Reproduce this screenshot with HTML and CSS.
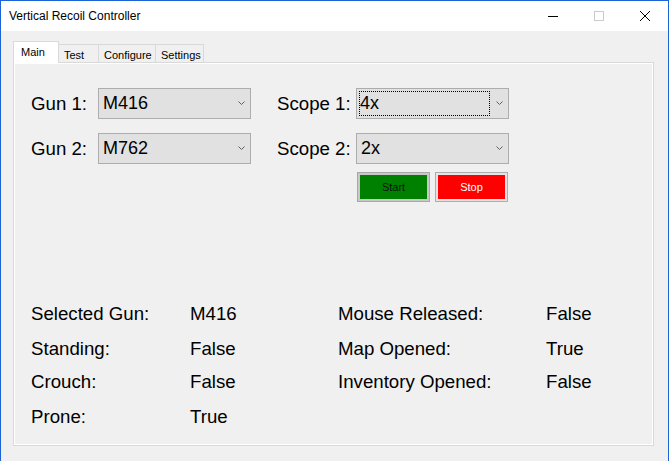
FILE: index.html
```html
<!DOCTYPE html>
<html lang="en">
<head>
  <meta charset="UTF-8" />
  <title>Vertical Recoil Controller</title>
  <link rel="stylesheet" href="styles.css">
</head>
<body>
  <div class="window">
    <!-- Caption bar -->
    <div class="title-bar">
      <span class="title">Vertical Recoil Controller</span>
      <div class="caption-buttons">
        <span class="caption-btn">
          <svg width="10" height="10" viewBox="0 0 10 10"><line x1="0" y1="5.5" x2="10" y2="5.5" stroke="#000" stroke-width="1"/></svg>
        </span>
        <span class="caption-btn">
          <svg width="10" height="10" viewBox="0 0 10 10"><rect x="0.5" y="0.5" width="9" height="9" fill="none" stroke="#cccccc" stroke-width="1"/></svg>
        </span>
        <span class="caption-btn">
          <svg width="10" height="10" viewBox="0 0 10 10"><path d="M0 0 L10 10 M10 0 L0 10" stroke="#000" stroke-width="1"/></svg>
        </span>
      </div>
    </div>

    <div class="tab-control">
      <div class="tab-strip">
        <div class="tab tab-main active">Main</div>
        <div class="tab tab-test">Test</div>
        <div class="tab tab-configure">Configure</div>
        <div class="tab tab-settings">Settings</div>
      </div>

      <div class="tab-page">
        <div class="selectors">
          <div class="field-group gun-group">
            <label class="field-label">Gun 1:</label>
            <div class="combo">
              <span class="combo-value">M416</span>
              <span class="combo-arrow"><svg width="7" height="4" viewBox="0 0 7 4"><polyline points="0.5,0.5 3.5,3.5 6.5,0.5" fill="none" stroke="#606060" stroke-width="1"/></svg></span>
            </div>

            <label class="field-label">Gun 2:</label>
            <div class="combo">
              <span class="combo-value">M762</span>
              <span class="combo-arrow"><svg width="7" height="4" viewBox="0 0 7 4"><polyline points="0.5,0.5 3.5,3.5 6.5,0.5" fill="none" stroke="#606060" stroke-width="1"/></svg></span>
            </div>
          </div>

          <div class="field-group scope-group">
            <label class="field-label">Scope 1:</label>
            <div class="combo">
              <span class="combo-value focused">4x</span>
              <span class="combo-arrow"><svg width="7" height="4" viewBox="0 0 7 4"><polyline points="0.5,0.5 3.5,3.5 6.5,0.5" fill="none" stroke="#606060" stroke-width="1"/></svg></span>
            </div>

            <label class="field-label">Scope 2:</label>
            <div class="combo">
              <span class="combo-value">2x</span>
              <span class="combo-arrow"><svg width="7" height="4" viewBox="0 0 7 4"><polyline points="0.5,0.5 3.5,3.5 6.5,0.5" fill="none" stroke="#606060" stroke-width="1"/></svg></span>
            </div>

            <div class="buttons">
              <button class="btn btn-start">Start</button>
              <button class="btn btn-stop">Stop</button>
            </div>
          </div>
        </div>

        <!-- Live state readout -->
        <div class="status-grid">
          <span>Selected Gun:</span><span>M416</span>
          <span>Mouse Released:</span><span>False</span>

          <span>Standing:</span><span>False</span>
          <span>Map Opened:</span><span>True</span>

          <span>Crouch:</span><span>False</span>
          <span>Inventory Opened:</span><span>False</span>

          <span>Prone:</span><span>True</span>
        </div>
      </div>
    </div>
  </div>
</body>
</html>
```

FILE: styles.css
```css
* {
  box-sizing: border-box;
  margin: 0;
  padding: 0;
}

body {
  width: 669px;
  height: 461px;
  overflow: hidden;
  background-color: #f0f0f0;
  font-family: 'Liberation Sans', Arial, sans-serif;
  color: #000;
}

/* Window frame */
.window {
  height: 461px;
  border-top: 1px solid #1b63d6;
  border-left: 1px solid #1b63d6;
  border-right: 1px solid #1b63d6;
  background-color: #f0f0f0;
}

.title-bar {
  display: flex;
  align-items: center;
  justify-content: space-between;
  height: 30px;
  padding-left: 8px;
  background-color: #fff;
}

.title {
  font-size: 12px;
}

.caption-buttons {
  display: flex;
  height: 100%;
}

.caption-btn {
  display: flex;
  align-items: center;
  justify-content: center;
  width: 46px;
  height: 30px;
}

/* Tabs */
.tab-control {
  width: 641px;
  margin: 10px 0 0 12px;
}

.tab-strip {
  position: relative;
  z-index: 1;
  display: flex;
  align-items: flex-end;
  height: 21px;
}

.tab {
  height: 18px;
  margin-left: -1px;
  padding: 2px 0 0 5px;
  border: 1px solid #d9d9d9;
  border-bottom: none;
  background-color: #f0f0f0;
  font-size: 11px;
  line-height: 16px;
}

.tab.active {
  height: 22px;
  margin-left: 0;
  margin-bottom: -1px;
  padding: 2px 0 0 7px;
  background-color: #fff;
}

.tab-main { width: 46px; }
.tab-test { width: 41px; }
.tab-configure { width: 58px; }
.tab-settings { width: 49px; }

.tab-page {
  height: 384px;
  border: 1px solid #d9d9d9;
  box-shadow: inset 0 0 0 1px #fff;
}

/* Gun / scope pickers */
.selectors {
  display: flex;
  gap: 26px;
  padding: 25px 0 0 17px;
}

.field-group {
  display: grid;
  grid-template-columns: 67px 153px;
  row-gap: 14px;
  align-items: center;
  align-content: start;
}

.scope-group {
  grid-template-columns: 79px 153px;
}

.field-label {
  font-size: 18.67px;
  line-height: 22px;
}

.combo {
  display: flex;
  height: 31px;
  padding: 2px 0 2px 2px;
  border: 1px solid #adadad;
  background-color: #e1e1e1;
}

.combo-value {
  flex: 1;
  padding-left: 1px;
  border: 1px dotted transparent;
  font-size: 18px;
  line-height: 23px;
}

.combo-value.focused {
  border-color: #000;
  padding-left: 0;
}

.combo-arrow {
  display: flex;
  align-items: center;
  width: 18px;
  padding-left: 6px;
  padding-bottom: 1px;
}

.buttons {
  grid-column: 2;
  display: flex;
  gap: 5px;
  margin-top: -6px;
  padding-left: 1px;
}

.btn {
  width: 73px;
  height: 30px;
  border: 1px solid #adadad;
  font-family: 'Liberation Sans', Arial, sans-serif;
  font-size: 11px;
}

.btn-start {
  background-color: #008000;
  box-shadow: inset 0 0 0 2px #c8c8c8;
  border-color: #a8a8a8;
  color: #111;
}

.btn-stop {
  background-color: #ff0000;
  box-shadow: inset 0 0 0 2px #e5e5e5;
  color: #fff;
}

/* Status readout */
.status-grid {
  display: grid;
  grid-template-columns: 159px 148px 208px 1fr;
  grid-template-rows: 35px 33px 35px 22px;
  margin-top: 101px;
  padding-left: 17px;
  font-size: 18.67px;
  line-height: 22px;
}
```
